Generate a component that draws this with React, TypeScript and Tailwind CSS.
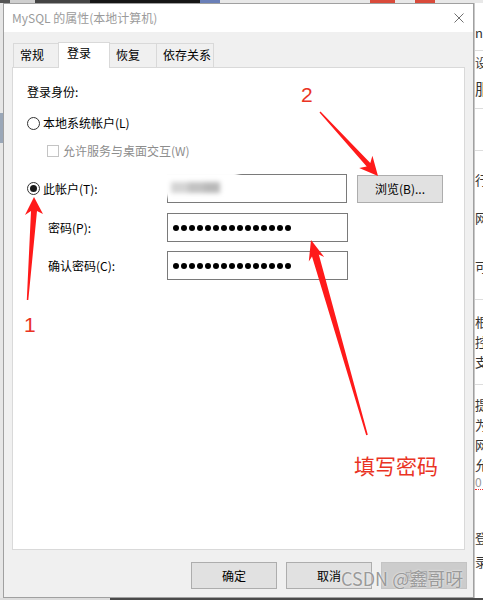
import React from 'react';

const Radio: React.FC<{ checked?: boolean }> = ({ checked }) => (
  <span className="flex h-[13px] w-[13px] shrink-0 items-center justify-center rounded-full border border-[#333333] bg-white">
    {checked && <span className="h-[7px] w-[7px] rounded-full bg-[#1a1a1a]" />}
  </span>
);

const PasswordDots: React.FC = () => (
  <div className="flex h-full items-center gap-[2px] pl-[5px]">
    {Array.from({ length: 15 }).map((_, i) => (
      <span key={i} className="h-[6px] w-[6px] rounded-full bg-black" />
    ))}
  </div>
);

const Button: React.FC<{ label: string; disabled?: boolean }> = ({ label, disabled }) => (
  <div
    className={`flex h-[27px] w-[86px] items-center justify-center border text-[12px] ${
      disabled ? 'border-[#c4c4c4] bg-[#cccccc] text-[#a3a3a3]' : 'border-[#adadad] bg-[#e1e1e1] text-black'
    }`}
  >
    {label}
  </div>
);

const tabs = [
  { label: '常规', width: 'w-[46px]', active: false },
  { label: '登录', width: 'w-[52px]', active: true },
  { label: '恢复', width: 'w-[48px]', active: false },
  { label: '依存关系', width: 'w-[58px]', active: false },
];

// the page behind the dialog, only a sliver of it shows on the right
const Backdrop: React.FC = () => (
  <div className="flex w-[9px] flex-col overflow-hidden border-l border-[#c8c8c8] bg-white text-[13px] leading-[20px] whitespace-nowrap text-[#333]">
    <div className="h-[20px]" />
    <div className="h-[20px]">n</div>
    <div className="h-[7px]" />
    <div className="h-px bg-[#dddddd]" />
    <div className="h-[2px]" />
    <div className="h-[20px] text-[12px]">设</div>
    <div className="h-[5px]" />
    <div className="h-[20px] text-[16px]">服</div>
    <div className="h-[10px]" />
    <div className="h-px bg-[#dddddd]" />
    <div className="h-[41px]" />
    <div className="h-px bg-[#dddddd]" />
    <div className="h-[19px]" />
    <div className="h-[20px]">行</div>
    <div className="h-[18px]" />
    <div className="h-[20px]">网</div>
    <div className="h-[29px]" />
    <div className="h-[20px]">可</div>
    <div className="h-[22px]" />
    <div className="h-px bg-[#dddddd]" />
    <div className="h-[12px]" />
    <div className="h-[20px]">根</div>
    <div className="h-[20px]">控</div>
    <div className="h-[20px]">支</div>
    <div className="h-[12px]" />
    <div className="h-px bg-[#dddddd]" />
    <div className="h-[10px]" />
    <div className="h-[20px]">提</div>
    <div className="h-[20px]">为</div>
    <div className="h-[20px]">网</div>
    <div className="h-[20px]">允</div>
    <div className="h-[15px] border-b border-dotted border-[#e33] text-[12px] leading-[14px] text-[#999]">0</div>
    <div className="h-[38px]" />
    <div className="h-[20px]">登</div>
    <div className="h-[4px]" />
    <div className="h-[20px]">录</div>
    <div className="flex-1" />
  </div>
);

const App: React.FC = () => {
  return (
    <div className="relative flex h-[600px] w-[483px] flex-col overflow-hidden bg-white font-['Noto_Sans_CJK_SC','Noto_Sans',sans-serif]">
      {/* top edge of the desktop */}
      <div className="flex h-[3px]">
        <div className="w-[10px] bg-[#555555]" />
        <div className="w-[25px] bg-[#cfcfcf]" />
        <div className="w-[55px] bg-[#444444]" />
        <div className="w-[110px] bg-[#151515]" />
        <div className="w-[20px] bg-[#6a7fb8]" />
        <div className="w-[150px] bg-[#e8e8e8]" />
        <div className="w-[25px] bg-[#d94a3a]" />
        <div className="w-[20px] bg-[#e8e8e8]" />
        <div className="w-[20px] bg-[#d94a3a]" />
        <div className="flex-1 bg-[#e8e8e8]" />
      </div>

      <div className="flex h-[595px]">
        <div className="flex w-[3px] flex-col">
          <div className="h-[110px] bg-[#e6e6e6]" />
          <div className="h-[30px] bg-[#9aa7b8]" />
          <div className="flex-1 bg-[#e6e6e6]" />
        </div>

        {/* dialog */}
        <div className="flex w-[471px] flex-col border border-[#a0a0a0] bg-[#f0f0f0]">
          <div className="flex h-[28px] items-center justify-between bg-white pl-[8px] pr-[9px]">
            <span className="text-[12px] text-[#9b9b9b]">MySQL 的属性(本地计算机)</span>
            <svg width="10" height="10" viewBox="0 0 10 10">
              <path d="M0.5 0.5 L9.5 9.5 M9.5 0.5 L0.5 9.5" stroke="#707070" strokeWidth="1" fill="none" />
            </svg>
          </div>

          <div className="relative z-10 ml-[10px] mt-[10px] flex h-[26px] items-end text-[12px] text-black">
            {tabs.map((t) =>
              t.active ? (
                <div key={t.label} className={`-ml-px h-[26px] ${t.width} border border-b-0 border-[#d9d9d9] bg-white pl-[8px] pt-[2px] leading-[16px]`}>
                  {t.label}
                </div>
              ) : (
                <div key={t.label} className={`-ml-px h-[25px] ${t.width} border border-[#d9d9d9] bg-[#f0f0f0] pl-[6px] pt-[3px] leading-[16px]`}>
                  {t.label}
                </div>
              ),
            )}
          </div>

          {/* tab panel */}
          <div className="relative ml-[8px] mr-[8px] -mt-px h-[483px] border border-[#d9d9d9] bg-white pl-[14px] pt-[16px] text-[12px] leading-[16px] text-black">
            <div className="h-[16px]">登录身份:</div>

            <div className="mt-[15px] flex h-[16px] items-center gap-[3px]">
              <Radio />
              <span>本地系统帐户(L)</span>
            </div>

            <div className="mt-[12px] flex h-[16px] items-center gap-[4px] pl-[20px] text-[#8d8d8d]">
              <span className="h-[12px] w-[12px] border border-[#c4c4c4] bg-white" />
              <span>允许服务与桌面交互(W)</span>
            </div>

            <div className="mt-[15px] flex h-[29px] items-center">
              <div className="flex w-[140px] items-center gap-[3px]">
                <Radio checked />
                <span>此帐户(T):</span>
              </div>
              <div className="relative h-[29px] w-[180px] border border-[#7a7a7a] bg-white">
                <div className="absolute -left-[8px] -top-[5px] h-[27px] w-[78px] bg-white blur-[2px]">
                  <div className="ml-[11px] mt-[12px] flex h-[11px] blur-[1px]">
                    <div className="w-[17px] bg-[#d4d4d4]" />
                    <div className="w-[16px] bg-[#c2c2c2]" />
                    <div className="w-[16px] bg-[#b8b8b8]" />
                  </div>
                </div>
              </div>
              <div className="ml-[10px] flex h-[28px] w-[86px] items-center justify-center border border-[#adadad] bg-[#e1e1e1]">
                浏览(B)...
              </div>
            </div>

            <div className="mt-[10px] flex h-[29px] items-center">
              <div className="w-[140px] pl-[21px]">密码(P):</div>
              <div className="h-[29px] w-[181px] border border-[#7a7a7a] bg-white">
                <PasswordDots />
              </div>
            </div>

            <div className="mt-[9px] flex h-[29px] items-center">
              <div className="w-[140px] pl-[21px]">确认密码(C):</div>
              <div className="h-[29px] w-[181px] border border-[#7a7a7a] bg-white">
                <PasswordDots />
              </div>
            </div>
          </div>

          <div className="mt-[12px] flex justify-end gap-[9px] pr-[6px]">
            <Button label="确定" />
            <Button label="取消" />
            <Button label="应用(A)" disabled />
          </div>
        </div>

        <Backdrop />
      </div>

      <div className="flex h-[2px]">
        <div className="w-[110px] bg-[#dcdcdc]" />
        <div className="flex-1 bg-[#4a4a4a]" />
      </div>

      {/* red annotations drawn over the screenshot */}
      <svg className="pointer-events-none absolute inset-0" width="483" height="600" viewBox="0 0 483 600">
        <path d="M34 197 L43 214 L37 211 L28.3 300 L26.8 300 L31 211 L25 215 Z" fill="#ff1a1a" />
        <path d="M378 176 L372.4 155.7 L370.3 163 L320.5 111.5 L319.5 112.5 L366.7 166.4 L359.2 167.9 Z" fill="#ff1a1a" />
        <path d="M311 240 L324.2 257 L318.8 254.4 L367.8 434.8 L366.2 435.2 L312 256.4 L308.8 261.4 Z" fill="#ff1a1a" />
      </svg>
      <span className="pointer-events-none absolute left-[301px] top-[84px] font-['Liberation_Sans',sans-serif] text-[21px] leading-none text-[#ea3323]">
        2
      </span>
      <span className="pointer-events-none absolute left-[24px] top-[314px] font-['Liberation_Sans',sans-serif] text-[21px] leading-none text-[#ea3323]">
        1
      </span>
      <span className="pointer-events-none absolute left-[354px] top-[455px] text-[21px] leading-none text-[#ea3323]">
        填写密码
      </span>
      <span className="pointer-events-none absolute left-[341px] top-[569px] text-[18px] leading-none text-[#9a9a9a] [text-shadow:0_0_2px_#ffffff]">
        CSDN @鑫哥呀
      </span>
    </div>
  );
};

export default App;
